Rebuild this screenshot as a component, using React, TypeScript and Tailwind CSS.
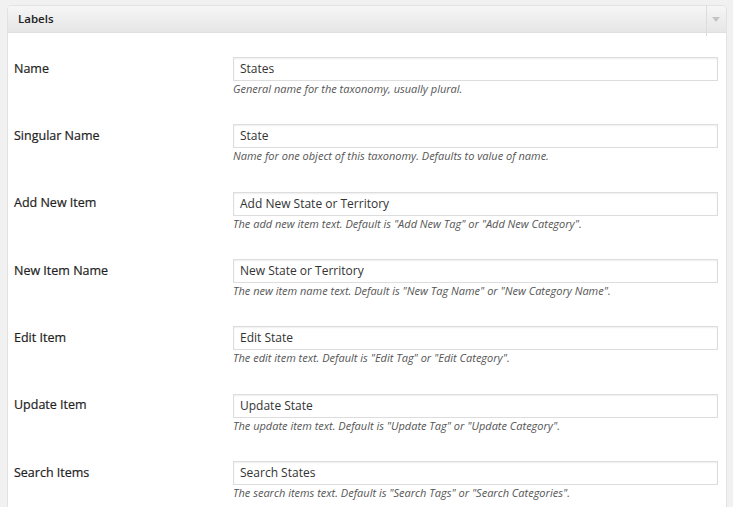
import React from "react";

const rows = [
  { label: "Name", value: "States", desc: "General name for the taxonomy, usually plural." },
  { label: "Singular Name", value: "State", desc: "Name for one object of this taxonomy. Defaults to value of name." },
  { label: "Add New Item", value: "Add New State or Territory", desc: 'The add new item text. Default is "Add New Tag" or "Add New Category".' },
  { label: "New Item Name", value: "New State or Territory", desc: 'The new item name text. Default is "New Tag Name" or "New Category Name".' },
  { label: "Edit Item", value: "Edit State", desc: 'The edit item text. Default is "Edit Tag" or "Edit Category".' },
  { label: "Update Item", value: "Update State", desc: 'The update item text. Default is "Update Tag" or "Update Category".' },
  { label: "Search Items", value: "Search States", desc: 'The search items text. Default is "Search Tags" or "Search Categories".' },
];

export default function App() {
  return (
    <div
      className="h-[507px] w-[733px] overflow-hidden bg-[#f1f1f1] pt-[5px] pl-[7px] pr-[6px]"
      style={{ fontFamily: '"Open Sans", "Noto Sans", sans-serif' }}
    >
      <div className="rounded-t-[4px] border border-[#e2e2e2] bg-white">
        <div className="relative flex h-[27px] items-center rounded-t-[4px] border-b border-[#dfdfdf] bg-gradient-to-b from-[#f6f6f6] to-[#e6e6e6] pl-[10px]">
          <span className="text-[11.5px] font-semibold text-[#222]">Labels</span>
          <div className="absolute right-[19px] top-0 h-[30px] w-px bg-[#dcdcdc]" />
          <div className="absolute right-[6px] top-[11px] h-0 w-0 border-x-[4px] border-t-[5px] border-x-transparent border-t-[#c4c4c4]" />
        </div>
        <div className="pt-[24px] pl-[6px] pr-[8px]">
          {rows.map((r) => (
            <div key={r.label} className="flex h-[67.33px]">
              <div className="flex h-[24px] w-[219px] shrink-0 items-center text-[12.5px] font-normal text-[#1e1e1e] [-webkit-text-stroke:0.2px_#1e1e1e]">
                {r.label}
              </div>
              <div className="flex-1">
                <div className="flex h-[24px] items-center border border-[#dddddd] pl-[6px] text-[12px] text-[#333] shadow-[inset_0_1px_2px_rgba(0,0,0,0.07)]">
                  {r.value}
                </div>
                <div className="text-[11px] italic leading-[16px] text-[#555]">{r.desc}</div>
              </div>
            </div>
          ))}
        </div>
      </div>
    </div>
  );
}
